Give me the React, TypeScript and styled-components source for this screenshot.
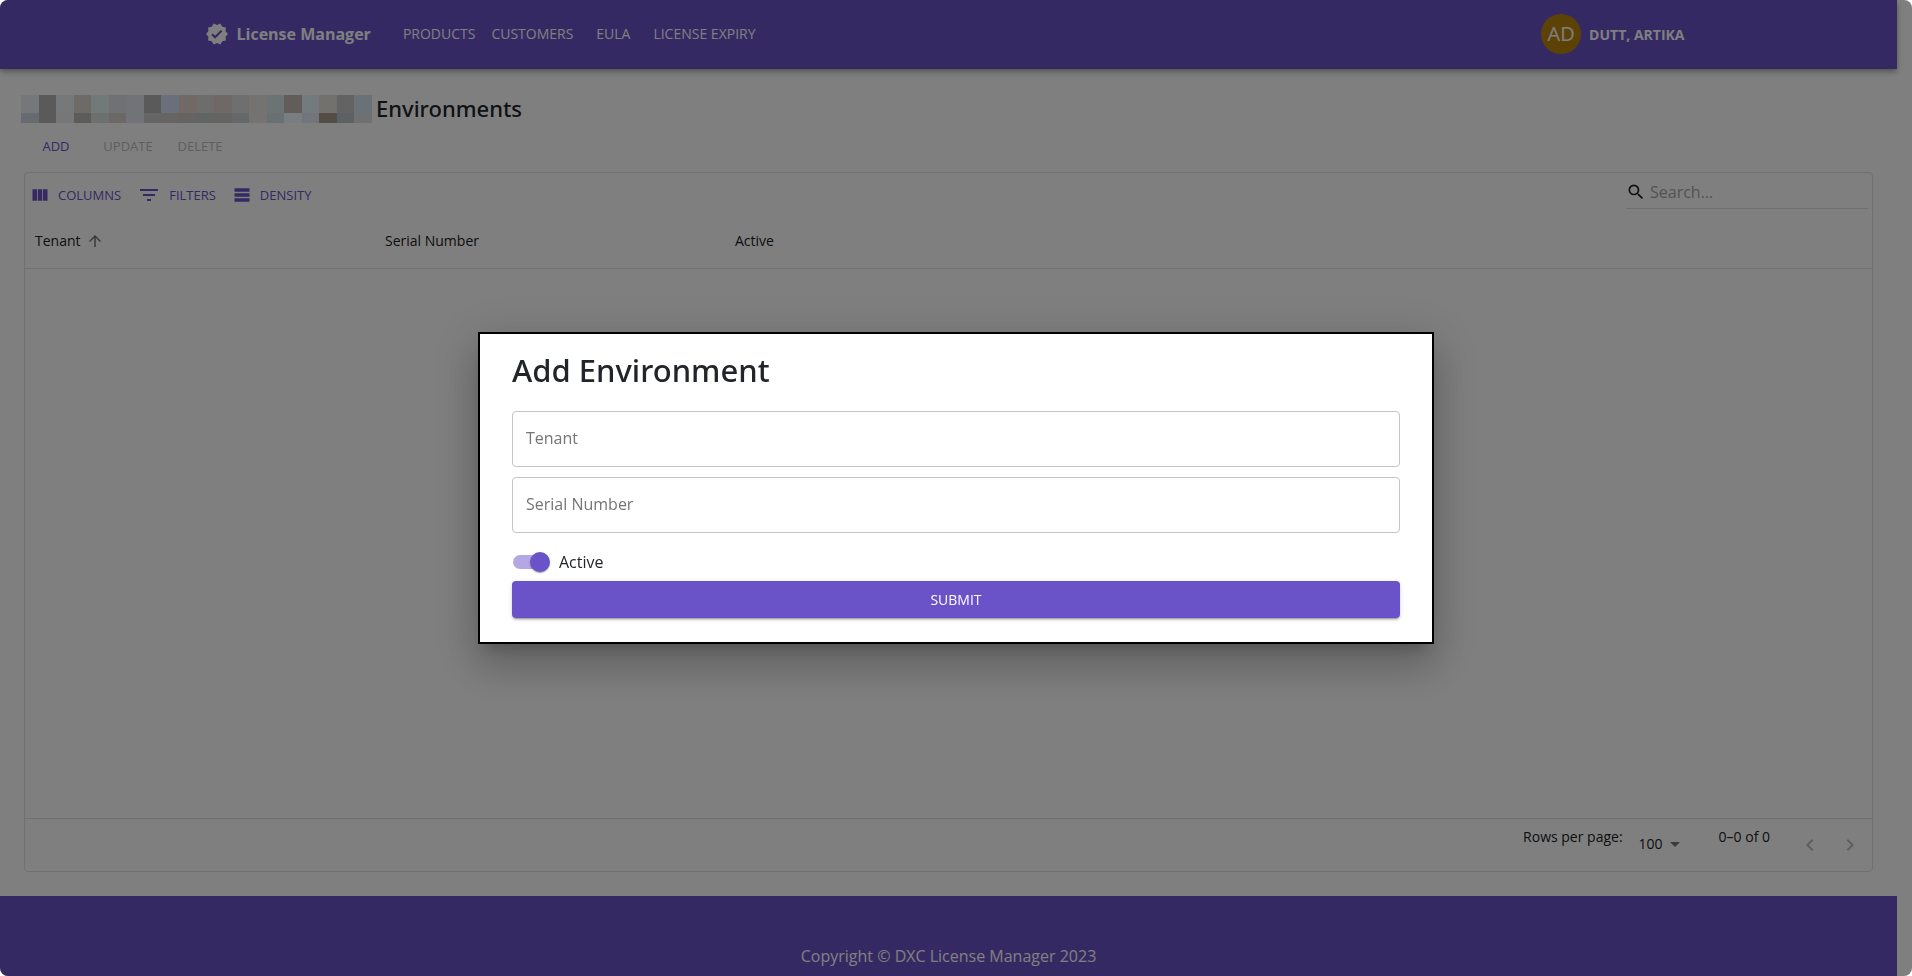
import React, { useState } from "react";
import styled, { createGlobalStyle } from "styled-components";
import {
  MdVerified,
  MdViewColumn,
  MdFilterList,
  MdTableRows,
  MdArrowUpward,
  MdSearch,
  MdArrowDropDown,
  MdKeyboardArrowLeft,
  MdKeyboardArrowRight,
} from "react-icons/md";

const purple = "#6a52c8";
const line = "#e0e0e0";

const GlobalStyle = createGlobalStyle`
  *, *::before, *::after { box-sizing: border-box; }
  body {
    margin: 0;
    background: #fff;
    color: #212529;
    font-family: "Open Sans", sans-serif;
    font-size: 16px;
    line-height: 24px;
  }
  button, input, select { font-family: inherit; }
`;

const Page = styled.div`
  display: flex;
  flex-direction: column;
  min-height: 100vh;
  padding-right: 15px;
  border-radius: 8px;
  overflow: hidden;
`;

const Header = styled.header`
  display: flex;
  justify-content: center;
  background: ${purple};
  color: #fff;
  box-shadow: 0 2px 4px -1px rgba(0, 0, 0, 0.2), 0 4px 5px rgba(0, 0, 0, 0.14),
    0 1px 10px rgba(0, 0, 0, 0.12);
`;

const HeaderInner = styled.div`
  display: flex;
  align-items: center;
  width: 100%;
  max-width: 1536px;
  height: 69px;
  padding: 0 24px 1px;
`;

const Brand = styled.a`
  display: flex;
  align-items: center;
  gap: 8px;
  margin-right: 24px;
  color: inherit;
  font-weight: 700;
  text-decoration: none;
  svg { width: 24px; height: 24px; }
`;

const Nav = styled.nav`
  display: flex;
  flex: 1;
`;

const NavButton = styled.button`
  min-width: 64px;
  padding: 6px 8px;
  border: 0;
  background: none;
  color: inherit;
  font-size: 14px;
  line-height: 24px;
`;

const User = styled.div`
  display: flex;
  align-items: center;
`;

const Avatar = styled.span`
  display: flex;
  align-items: center;
  justify-content: center;
  width: 40px;
  height: 40px;
  border-radius: 50%;
  background: #b8860b;
  font-size: 20px;
`;

const UserButton = styled(NavButton)`
  padding: 7px 8px 5px;
  font-weight: 700;
`;

const Main = styled.main`
  display: flex;
  flex: 1;
  flex-direction: column;
  padding: 24px;
`;

const TitleRow = styled.div`
  display: flex;
  align-items: center;
  gap: 4px;
  height: 32px;
  margin-left: -3px;
`;

const Title = styled.h1`
  margin: 0;
  padding-bottom: 2px;
  font-family: "Noto Sans", sans-serif;
  font-size: 22px;
  font-weight: 500;
  line-height: 30px;
`;

const Actions = styled.div`
  display: flex;
  gap: 8px;
  margin: 6px 0 11px;
`;

const ActionButton = styled.button`
  min-width: 64px;
  padding: 4px 5px;
  border: 0;
  background: none;
  color: ${purple};
  font-size: 13px;
  line-height: 22px;
  &:disabled { color: #bdbdbd; }
`;

const Grid = styled.section`
  display: flex;
  flex: 1;
  flex-direction: column;
  border: 1px solid ${line};
  border-radius: 4px;
  color: #212121;
  font-size: 14px;
`;

const Toolbar = styled.div`
  display: flex;
  align-items: flex-start;
  justify-content: space-between;
  padding: 4px 4px 2px;
`;

const ToolButtons = styled.div`
  display: flex;
  gap: 14px;
  padding-top: 3px;
`;

const ToolButton = styled.button<{ $icon?: number }>`
  display: flex;
  align-items: center;
  gap: 8px;
  padding: 3px 1px;
  border: 0;
  background: none;
  color: ${purple};
  font-size: 13px;
  line-height: 22px;
  svg {
    width: ${(p) => p.$icon ?? 20}px;
    height: ${(p) => p.$icon ?? 20}px;
  }
`;

const SearchBox = styled.label`
  display: flex;
  align-items: center;
  width: 242px;
  height: 32px;
  padding-bottom: 2px;
  border-bottom: 1px solid ${line};
  color: #212121;
  svg { width: 20px; height: 20px; }
`;

const SearchInput = styled.input`
  flex: 1;
  min-width: 0;
  padding: 0;
  margin-left: 4px;
  border: 0;
  outline: 0;
  background: none;
  font-size: 16px;
  &::placeholder { color: #a6a6a6; opacity: 1; }
`;

const Table = styled.table`
  width: 100%;
  border-collapse: collapse;
  table-layout: fixed;
  th {
    width: 350px;
    height: 56px;
    padding: 2px 10px 0;
    border-bottom: 1px solid ${line};
    font-weight: 400;
    text-align: left;
  }
  th:last-child { width: auto; }
`;

const ColumnTitle = styled.span`
  display: flex;
  align-items: center;
  gap: 5px;
  svg { width: 18px; height: 18px; color: #757575; }
`;

const Pagination = styled.div`
  display: flex;
  align-items: flex-start;
  justify-content: flex-end;
  height: 53px;
  margin-top: auto;
  padding: 8px 2px 0 0;
  border-top: 1px solid ${line};
  line-height: 20px;
`;

const PageSize = styled.span`
  display: flex;
  position: relative;
  margin: 7px 32px 0 8px;
  svg {
    position: absolute;
    right: 0;
    top: -2px;
    width: 24px;
    height: 24px;
    color: #757575;
    pointer-events: none;
  }
`;

const PageSizeSelect = styled.select`
  appearance: none;
  padding: 0 23px 0 8px;
  border: 0;
  background: none;
  color: inherit;
  font-size: 14px;
  line-height: 20px;
`;

const PageButtons = styled.div`
  display: flex;
  margin-left: 20px;
  padding-top: 6px;
`;

const PageButton = styled.button`
  display: flex;
  padding: 0 8px;
  border: 0;
  background: none;
  color: #bdbdbd;
  svg { width: 24px; height: 24px; }
`;

const Footer = styled.footer`
  height: 80px;
  padding-top: 48px;
  background: ${purple};
  color: #fff;
  text-align: center;
`;

const Backdrop = styled.div`
  display: flex;
  position: fixed;
  inset: 0;
  align-items: center;
  justify-content: center;
  border-radius: 8px;
  background: rgba(0, 0, 0, 0.5);
`;

const Dialog = styled.form`
  display: flex;
  flex-direction: column;
  width: 50%;
  padding: 16px 32px 24px;
  border: 2px solid #000;
  background: #fff;
  box-shadow: 0 11px 15px -7px rgba(0, 0, 0, 0.2), 0 24px 38px 3px rgba(0, 0, 0, 0.14),
    0 9px 46px 8px rgba(0, 0, 0, 0.12);
`;

const DialogTitle = styled.h2`
  margin: 0 0 21px;
  font-family: "Noto Sans", sans-serif;
  font-size: 31px;
  font-weight: 500;
  line-height: 40px;
`;

const Field = styled.div`
  position: relative;
  margin-bottom: 10px;
`;

const FieldLabel = styled.label`
  position: absolute;
  left: 14px;
  top: 15px;
  color: #757575;
  pointer-events: none;
`;

const FieldInput = styled.input`
  display: block;
  width: 100%;
  height: 56px;
  padding: 16px 14px;
  border: 1px solid #c4c4c4;
  border-radius: 4px;
  background: #fff;
  font-size: 16px;
`;

const SwitchLabel = styled.label`
  display: flex;
  align-items: center;
  gap: 12px;
  height: 38px;
  padding-left: 1px;
`;

const Switch = styled.input`
  appearance: none;
  position: relative;
  width: 34px;
  height: 14px;
  margin: 0;
  border-radius: 7px;
  background: #9e9e9e;
  &::before {
    content: "";
    position: absolute;
    top: -3px;
    left: -3px;
    width: 20px;
    height: 20px;
    border-radius: 50%;
    background: #fff;
    box-shadow: 0 2px 1px -1px rgba(0, 0, 0, 0.2), 0 1px 1px rgba(0, 0, 0, 0.14),
      0 1px 3px rgba(0, 0, 0, 0.12);
  }
  &:checked { background: #b4a8e4; }
  &:checked::before { left: 17px; background: ${purple}; }
`;

const Submit = styled.button`
  height: 37px;
  border: 0;
  border-radius: 4px;
  background: ${purple};
  color: #fff;
  font-size: 14px;
  font-weight: 500;
  box-shadow: 0 3px 1px -2px rgba(0, 0, 0, 0.2), 0 2px 2px rgba(0, 0, 0, 0.14),
    0 1px 5px rgba(0, 0, 0, 0.12);
`;

const mosaicTop = [
  "#eaeef2", "#b4b4b4", "#ecf0f4", "#dcd4cc", "#e4f2f2", "#dee2e6", "#e4e6f0", "#b4b4b4", "#d4e0f2", "#e0d2cc",
  "#dadad8", "#dcd2cc", "#dedede", "#e8e6e4", "#d6e6ea", "#c4bab2", "#e8f6ff", "#e4e2da", "#c6c6c6", "#d4e2ee",
];
const mosaicBottom = [
  "#ced6e2", "#b4b4b4", "#eaeef2", "#bcb8b4", "#d8e0dc", "#d6d0cc", "#e4e6f0", "#cacaca", "#cec8c6", "#ccc6c6",
  "#c0c8c4", "#ccc8c6", "#c8d0d2", "#e8e6e4", "#d0e0e4", "#f0fcff", "#e0ecf6", "#a89a8e", "#b8c2c8", "#e0e0e0",
];

function Mosaic() {
  return (
    <svg width="351" height="28" viewBox="0 0 20 28" preserveAspectRatio="none" shapeRendering="crispEdges" aria-hidden="true">
      {mosaicTop.map((c, i) => <rect key={i} x={i} y="0" width="1" height="18" fill={c} />)}
      {mosaicBottom.map((c, i) => <rect key={i} x={i} y="18" width="1" height="10" fill={c} />)}
    </svg>
  );
}

export default function App() {
  const [tenant, setTenant] = useState("");
  const [serial, setSerial] = useState("");
  return (
    <>
      <GlobalStyle />
      <Page>
        <Header>
          <HeaderInner>
            <Brand href="#"><MdVerified />License Manager</Brand>
            <Nav>
              <NavButton>PRODUCTS</NavButton>
              <NavButton>CUSTOMERS</NavButton>
              <NavButton>EULA</NavButton>
              <NavButton>LICENSE EXPIRY</NavButton>
            </Nav>
            <User>
              <Avatar>AD</Avatar>
              <UserButton>DUTT, ARTIKA</UserButton>
            </User>
          </HeaderInner>
        </Header>
        <Main>
          <TitleRow>
            <Mosaic />
            <Title>Environments</Title>
          </TitleRow>
          <Actions>
            <ActionButton>ADD</ActionButton>
            <ActionButton disabled>UPDATE</ActionButton>
            <ActionButton disabled>DELETE</ActionButton>
          </Actions>
          <Grid>
            <Toolbar>
              <ToolButtons>
                <ToolButton><MdViewColumn />COLUMNS</ToolButton>
                <ToolButton $icon={24}><MdFilterList />FILTERS</ToolButton>
                <ToolButton><MdTableRows />DENSITY</ToolButton>
              </ToolButtons>
              <SearchBox>
                <MdSearch />
                <SearchInput type="search" aria-label="Search" placeholder="Search…" />
              </SearchBox>
            </Toolbar>
            <Table>
              <thead>
                <tr>
                  <th scope="col"><ColumnTitle>Tenant<MdArrowUpward /></ColumnTitle></th>
                  <th scope="col">Serial Number</th>
                  <th scope="col">Active</th>
                  <th aria-hidden="true" />
                </tr>
              </thead>
            </Table>
            <Pagination>
              <label htmlFor="page-size">Rows per page:</label>
              <PageSize>
                <PageSizeSelect id="page-size" defaultValue="100">
                  <option>100</option>
                </PageSizeSelect>
                <MdArrowDropDown />
              </PageSize>
              <span>0–0 of 0</span>
              <PageButtons>
                <PageButton disabled aria-label="Previous page"><MdKeyboardArrowLeft /></PageButton>
                <PageButton disabled aria-label="Next page"><MdKeyboardArrowRight /></PageButton>
              </PageButtons>
            </Pagination>
          </Grid>
        </Main>
        <Footer>Copyright © DXC License Manager 2023</Footer>
      </Page>
      <Backdrop>
        <Dialog role="dialog" aria-labelledby="dialog-title" onSubmit={(e) => e.preventDefault()}>
          <DialogTitle id="dialog-title">Add Environment</DialogTitle>
          <Field>
            {!tenant && <FieldLabel htmlFor="tenant">Tenant</FieldLabel>}
            <FieldInput id="tenant" value={tenant} onChange={(e) => setTenant(e.target.value)} />
          </Field>
          <Field>
            {!serial && <FieldLabel htmlFor="serial">Serial Number</FieldLabel>}
            <FieldInput id="serial" value={serial} onChange={(e) => setSerial(e.target.value)} />
          </Field>
          <SwitchLabel>
            <Switch type="checkbox" defaultChecked />
            Active
          </SwitchLabel>
          <Submit type="submit">SUBMIT</Submit>
        </Dialog>
      </Backdrop>
    </>
  );
}
